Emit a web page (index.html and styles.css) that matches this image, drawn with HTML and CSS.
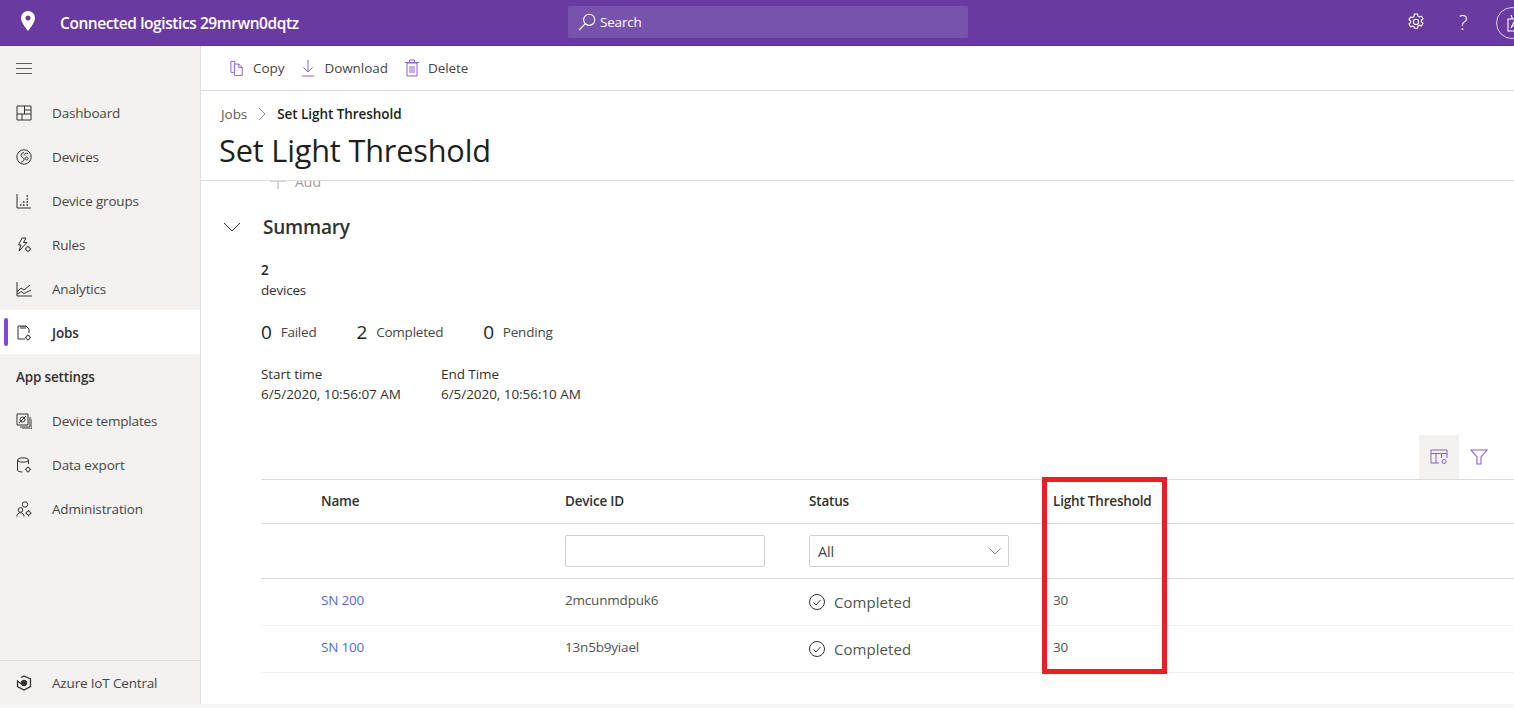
FILE: index.html
```html
<!DOCTYPE html>
<html lang="en">
<head>
<meta charset="utf-8">
<title>Set Light Threshold</title>
<link rel="stylesheet" href="styles.css">
</head>
<body>
<div class="app">
  <header class="topbar">
    <svg class="logo" width="16" height="20" viewBox="0 0 16 20"><path fill="#fff" fill-rule="evenodd" d="M8 0a7 7 0 0 1 7 7c0 4-4 9-7 13C5 16 1 11 1 7a7 7 0 0 1 7-7zm0 4.600a2.500 2.500 0 1 0 0 5 2.500 2.500 0 0 0 0-5z"/></svg>
    <div class="app-name">Connected logistics 29mrwn0dqtz</div>
    <div class="search">
      <svg width="18" height="18" viewBox="0 0 18 18" fill="none" stroke="#fff" stroke-width="1.100"><circle cx="11.200" cy="6.800" r="5.600"/><path d="M7.200 10.800 1 17"/></svg>
      <span>Search</span>
    </div>
    <div class="top-actions">
      <svg class="gear" width="18" height="18" viewBox="0 0 18 18" fill="none" stroke="#fff" stroke-width="1.100"><path d="M7.400 1h3.200l.4 2.200 1.300.7 2.100-.8 1.600 2.800-1.700 1.400v1.500l1.700 1.400-1.600 2.800-2.100-.8-1.300.7-.4 2.300H7.400L7 13.700l-1.300-.7-2.100.8L2 11l1.700-1.400V8.100L2 6.700l1.600-2.800 2.100.8L7 3.200z"/><circle cx="9" cy="8.900" r="2.600"/></svg>
      <span class="help">?</span>
      <div class="avatar">
        <svg width="14" height="18" viewBox="0 0 14 18" fill="none" stroke="#fff" stroke-width="1.100"><path d="M1 5h12v12H1zM4 1l1.500 4M10 1 8.500 5M4 14l3-6 3 6M5 12h4"/></svg>
      </div>
    </div>
  </header>

  <div class="body">
    <aside class="sidebar">
      <div class="hamburger"><span></span><span></span><span></span></div>
      <nav class="nav">
        <a class="nav-item"><svg class="ni" viewBox="0 0 16 16"><path d="M1 1h14v14H1zM8.500 1v8M1 9h14M6 9v6M8.500 5H15"/></svg>Dashboard</a>
        <a class="nav-item"><svg class="ni" viewBox="0 0 16 16"><circle cx="8" cy="8" r="7.200"/><path d="M8 3.500a3 3 0 0 0-3 3c0 2 3 2 3 4s-2.500 2.500-3 3M12 4.500c-2-.6-4 0-4 2"/><circle cx="10.500" cy="9.500" r="1.500"/></svg>Devices</a>
        <a class="nav-item"><svg class="ni" viewBox="0 0 16 16"><path d="M1 1v14h14"/><path class="dots" d="M4 12h1.500M7 12h1.500M10.500 12H12M7 9h1.500M10.500 9H12M10.500 6H12M10.500 3H12"/></svg>Device groups</a>
        <a class="nav-item"><svg class="ni" viewBox="0 0 16 16"><path d="M6 1h4L7.500 5.500H11L3 14l2-6H2.500z"/><circle cx="12" cy="12" r="2.200"/><path d="M12 8.800v1M12 14.200v1M8.800 12h1M14.200 12h1"/></svg>Rules</a>
        <a class="nav-item"><svg class="ni" viewBox="0 0 16 16"><path d="M1 1v14h15M1 11l4-4 3 2 6-5M1 13.500l4-3 3 2 7-3.500"/></svg>Analytics</a>
        <a class="nav-item is-active"><svg class="ni" viewBox="0 0 16 16"><path d="M9 14H2V1h8l3 3v4M5 1v3M7 1v3M9 1v3"/><circle cx="12" cy="12.500" r="2"/><path d="M12 9.500v1M12 14.500v1M9 12.500h1M14 12.500h1"/></svg>Jobs</a>
        <div class="nav-heading">App settings</div>
        <a class="nav-item"><svg class="ni" viewBox="0 0 16 16"><path d="M1 1h11v11H1zM14 4v10H4M16 6v10H6"/><circle cx="6.500" cy="6.500" r="2.500"/><path d="M3 10l7-7"/></svg>Device templates</a>
        <a class="nav-item"><svg class="ni" viewBox="0 0 16 16"><ellipse cx="7" cy="3" rx="5.500" ry="2.200"/><path d="M1.500 3v10c0 1 2 2 5 2M12.500 3v4"/><circle cx="12" cy="12.500" r="2"/><path d="M12 9.500v1M12 14.500v1M9 12.500h1M14 12.500h1"/></svg>Data export</a>
        <a class="nav-item"><svg class="ni" viewBox="0 0 16 16"><circle cx="9" cy="3.500" r="2.700"/><circle cx="4.500" cy="9" r="2.300"/><path d="M.8 15.500c0-5 7.200-5 7.200 0"/><circle cx="12.500" cy="12" r="2"/><path d="M12.500 9v1M12.500 14v1.500M9.500 12h1M14.500 12h1"/></svg>Administration</a>
      </nav>
      <div class="side-foot">
        <svg class="ni" viewBox="0 0 16 16"><path d="M5 2.500 8 1l6.500 3v7.500L8 15l-6.500-3.500V6l4 3" stroke-width="1.300"/><circle cx="8" cy="8" r="2.800" fill="#323130"/></svg>
        Azure IoT Central
      </div>
    </aside>

    <main class="main">
      <div class="toolbar">
        <button class="tool"><svg width="14" height="16" viewBox="0 0 16 18" fill="none" stroke="#8a5fe0" stroke-width="1.100"><path d="M5.500 4.500V1.500H1V14h3.500M5 4.500h5l4 4v9H5zM10 4.500v4h4"/></svg>Copy</button>
        <button class="tool"><svg width="14" height="18" viewBox="0 0 14 18" fill="none" stroke="#8a5fe0" stroke-width="1"><path d="M7 1v12M2.500 8.500 7 13l4.500-4.500M1 17h12"/></svg>Download</button>
        <button class="tool"><svg width="14" height="18" viewBox="0 0 14 18" fill="none" stroke="#8a5fe0" stroke-width="1"><path d="M2 4h10v13H2zM0 3.500h14M4.500 3V1h5v2M5 7v7M7 7v7M9 7v7"/></svg>Delete</button>
      </div>
      <div class="page-head">
        <div class="crumbs"><span class="crumb-link">Jobs</span><svg width="8" height="14" viewBox="0 0 8 14" fill="none" stroke="#8a8886"><path d="M1 1l6 6-6 6"/></svg><strong>Set Light Threshold</strong></div>
        <h1>Set Light Threshold</h1>
      </div>
      <div class="scroller">
        <div class="add-row"><svg width="16" height="16" viewBox="0 0 16 16" fill="none" stroke="#c8c6c4" stroke-width="1.500"><path d="M8 0v16M0 8h16"/></svg><span>Add</span></div>
        <div class="summary-head">
          <svg width="18" height="10" viewBox="0 0 18 10" fill="none" stroke="#323130"><path d="M1 1l8 8 8-8"/></svg>
          <h2>Summary</h2>
        </div>
        <div class="summary">
          <div class="count"><b>2</b><span>devices</span></div>
          <div class="stats">
            <div class="stat"><b>0</b>Failed</div>
            <div class="stat"><b>2</b>Completed</div>
            <div class="stat"><b>0</b>Pending</div>
          </div>
          <div class="times">
            <div><span>Start time</span><span>6/5/2020, 10:56:07 AM</span></div>
            <div><span>End Time</span><span>6/5/2020, 10:56:10 AM</span></div>
          </div>
        </div>
        <div class="grid-tools">
          <button class="gt is-on"><svg width="18" height="16" viewBox="0 0 18 16" fill="none" stroke="#8a5fe0"><path d="M9 14H1V1h16v8M1 4.500h16M6 4.500V14M11.500 4.500V9"/><circle cx="14" cy="12.500" r="2"/></svg></button>
          <button class="gt"><svg width="18" height="16" viewBox="0 0 18 16" fill="none" stroke="#8a5fe0" stroke-width="1.100"><path d="M1 1h16l-6 7v7H7V8z"/></svg></button>
        </div>
        <div class="table">
          <div class="row head"><span></span><span>Name</span><span>Device ID</span><span>Status</span><span>Light Threshold</span></div>
          <div class="row filter">
            <span></span><span></span>
            <span><input class="field" type="text" aria-label="Device ID"></span>
            <span><div class="field select">All<svg width="12" height="7" viewBox="0 0 12 7" fill="none" stroke="#8a8886"><path d="M.5.500 6 6 11.500.500"/></svg></div></span>
            <span></span>
          </div>
          <div class="row data"><span></span><a>SN 200</a><span>2mcunmdpuk6</span><span class="status"><svg width="16" height="16" viewBox="0 0 16 16" fill="none" stroke="#323130"><circle cx="8" cy="8" r="7.500"/><path d="M4.500 8.500l2.500 2.500 4.500-5"/></svg>Completed</span><span>30</span></div>
          <div class="row data"><span></span><a>SN 100</a><span>13n5b9yiael</span><span class="status"><svg width="16" height="16" viewBox="0 0 16 16" fill="none" stroke="#323130"><circle cx="8" cy="8" r="7.500"/><path d="M4.500 8.500l2.500 2.500 4.500-5"/></svg>Completed</span><span>30</span></div>
          <div class="highlight"></div>
        </div>
      </div>
    </main>
  </div>
  <div class="strip"></div>
</div>
</body>
</html>
```
FILE: styles.css
```css
* { box-sizing: border-box; }
html, body { margin: 0; height: 100%; overflow: hidden; }
body { font-family: "Open Sans", "Noto Sans", sans-serif; font-size: 13.500px; color: #323130; background: #fff; }
.app { height: 708px; display: flex; flex-direction: column; }

.topbar { height: 46px; flex: none; background: #693ba1; color: #fff; display: flex; align-items: center; border-bottom: 1px solid #5c3594; }
.logo { margin-left: 20px; margin-top: -3px; }
.app-name { margin-left: 24px; width: 508px; font-size: 15.500px; font-weight: 600; letter-spacing: -0.420px; white-space: nowrap; }
.search { width: 400px; height: 32px; margin-top: -1px; background: #7853ae; border-radius: 2px; display: flex; align-items: center; gap: 4px; padding-left: 10px; font-size: 13.500px; letter-spacing: -0.200px; }
.top-actions { margin-left: auto; display: flex; align-items: center; width: 107px; flex: none; }
.gear { margin-top: -2px; flex: none; }
.help { margin-left: 34px; font-size: 20px; line-height: 24px; font-weight: 300; width: 10px; flex: none; }
.avatar { margin-left: 27px; width: 32px; height: 32px; flex: none; border: 1px solid #d9cfe9; border-radius: 50%; display: flex; align-items: center; padding-left: 10px; }

.body { flex: 1; min-height: 0; display: flex; }
.sidebar { width: 201px; flex: none; background: #f3f2f1; border-right: 1px solid #e1dfdd; display: flex; flex-direction: column; }
.hamburger { height: 44px; flex: none; padding: 17px 0 0 16px; display: flex; flex-direction: column; gap: 4px; }
.hamburger span { display: block; width: 16px; height: 1px; background: #605e5c; }
.nav { flex: 1; }
.nav-item, .nav-heading { height: 44px; display: flex; align-items: center; white-space: nowrap; letter-spacing: -0.170px; color: #484644; padding-top: 2px; }
.nav-item { padding-left: 16px; position: relative; }
.ni { width: 16px; height: 16px; margin-right: 20px; flex: none; fill: none; stroke: #323130; stroke-width: 1; }
.dots { stroke-dasharray: 1.500 1; stroke-width: 1.400; }
.is-active { background: #fff; font-weight: 600; color: #323130; }
.is-active::before { content: ""; position: absolute; left: 4px; top: 8px; width: 4px; height: 28px; border-radius: 2px; background: #8047d9; }
.nav-heading { padding-left: 16px; font-weight: 600; color: #323130; }
.side-foot { height: 44px; flex: none; border-top: 1px solid #e1dfdd; padding-left: 16px; display: flex; align-items: center; letter-spacing: -0.170px; color: #484644; }

.main { flex: 1; min-width: 0; display: flex; flex-direction: column; }
.toolbar { height: 45px; flex: none; border-bottom: 1px solid #dcdbda; display: flex; align-items: center; padding-left: 29px; gap: 17px; }
.tool { border: 0; background: none; padding: 0; display: flex; align-items: center; gap: 9px; font: inherit; letter-spacing: -0.060px; color: #484644; }
.page-head { height: 90px; flex: none; border-bottom: 1px solid #dcdbda; padding-left: 18px; }
.crumbs { height: 46px; display: flex; align-items: center; padding: 0 0 0 2px; gap: 11px; letter-spacing: -0.060px; }
.crumb-link { color: #605e5c; }
.crumbs strong { font-weight: 600; color: #201f1e; }
h1 { margin: -7px 0 0; font-size: 30.700px; line-height: 40px; font-weight: 400; color: #201f1e; letter-spacing: -0.170px; white-space: nowrap; }

.scroller { flex: 1; min-height: 0; overflow: hidden; }
.add-row { height: 22px; margin-top: -11px; padding-left: 69px; display: flex; align-items: center; gap: 9px; color: #a19f9d; font-size: 14px; }
.summary-head { display: flex; align-items: center; height: 44px; margin-top: 13px; padding-left: 22px; gap: 22px; }
h2 { margin: 0; font-size: 19px; font-weight: 600; color: #323130; letter-spacing: -0.200px; }
.summary { padding-left: 60px; margin-top: 11px; }
.count { display: flex; flex-direction: column; line-height: 20px; letter-spacing: -0.200px; }
.count b { font-weight: 600; color: #201f1e; }
.stats { display: flex; gap: 40px; margin-top: 20px; height: 24px; align-items: center; }
.stat { display: flex; align-items: center; gap: 9px; letter-spacing: -0.220px; color: #484644; }
.stat b { font-size: 19px; font-weight: 400; color: #201f1e; }
.times { display: flex; margin-top: 20px; letter-spacing: -0.050px; line-height: 20px; }
.times div { width: 180px; display: flex; flex-direction: column; white-space: nowrap; }

.grid-tools { display: flex; justify-content: flex-end; margin-top: 31px; padding-right: 15px; height: 44px; }
.gt { width: 40px; height: 44px; border: 0; background: none; padding: 0; display: flex; align-items: center; justify-content: center; }
.is-on { background: #f3f2f1; }

.table { margin-left: 60px; position: relative; }
.row { display: grid; grid-template-columns: 60px 244px 244px 244px 1fr; align-items: center; letter-spacing: -0.190px; }
.head { height: 45px; border-top: 1px solid #dcdbda; border-bottom: 1px solid #dcdbda; font-weight: 600; color: #323130; padding-bottom: 2px; }
.filter { height: 55px; border-bottom: 1px solid #dcdbda; }
.data { height: 47px; border-bottom: 1px solid #f3f2f1; color: #555350; padding-bottom: 4px; }
.data a { color: #4f6bed; }
.field { display: flex; align-items: center; justify-content: space-between; width: 200px; height: 32px; border: 1px solid #d2d0ce; border-radius: 2px; background: #fff; padding: 0 7px 0 8px; font: inherit; }
.select { font-size: 14.500px; color: #484644; }
.status { display: flex; align-items: center; gap: 9px; font-size: 15px; letter-spacing: 0.050px; padding-top: 4px; }
.highlight { position: absolute; left: 781px; top: -2px; width: 125px; height: 197px; border: 5px solid #ee1c25; pointer-events: none; }
.strip { height: 4px; flex: none; background: #f6f6f6; }
```
